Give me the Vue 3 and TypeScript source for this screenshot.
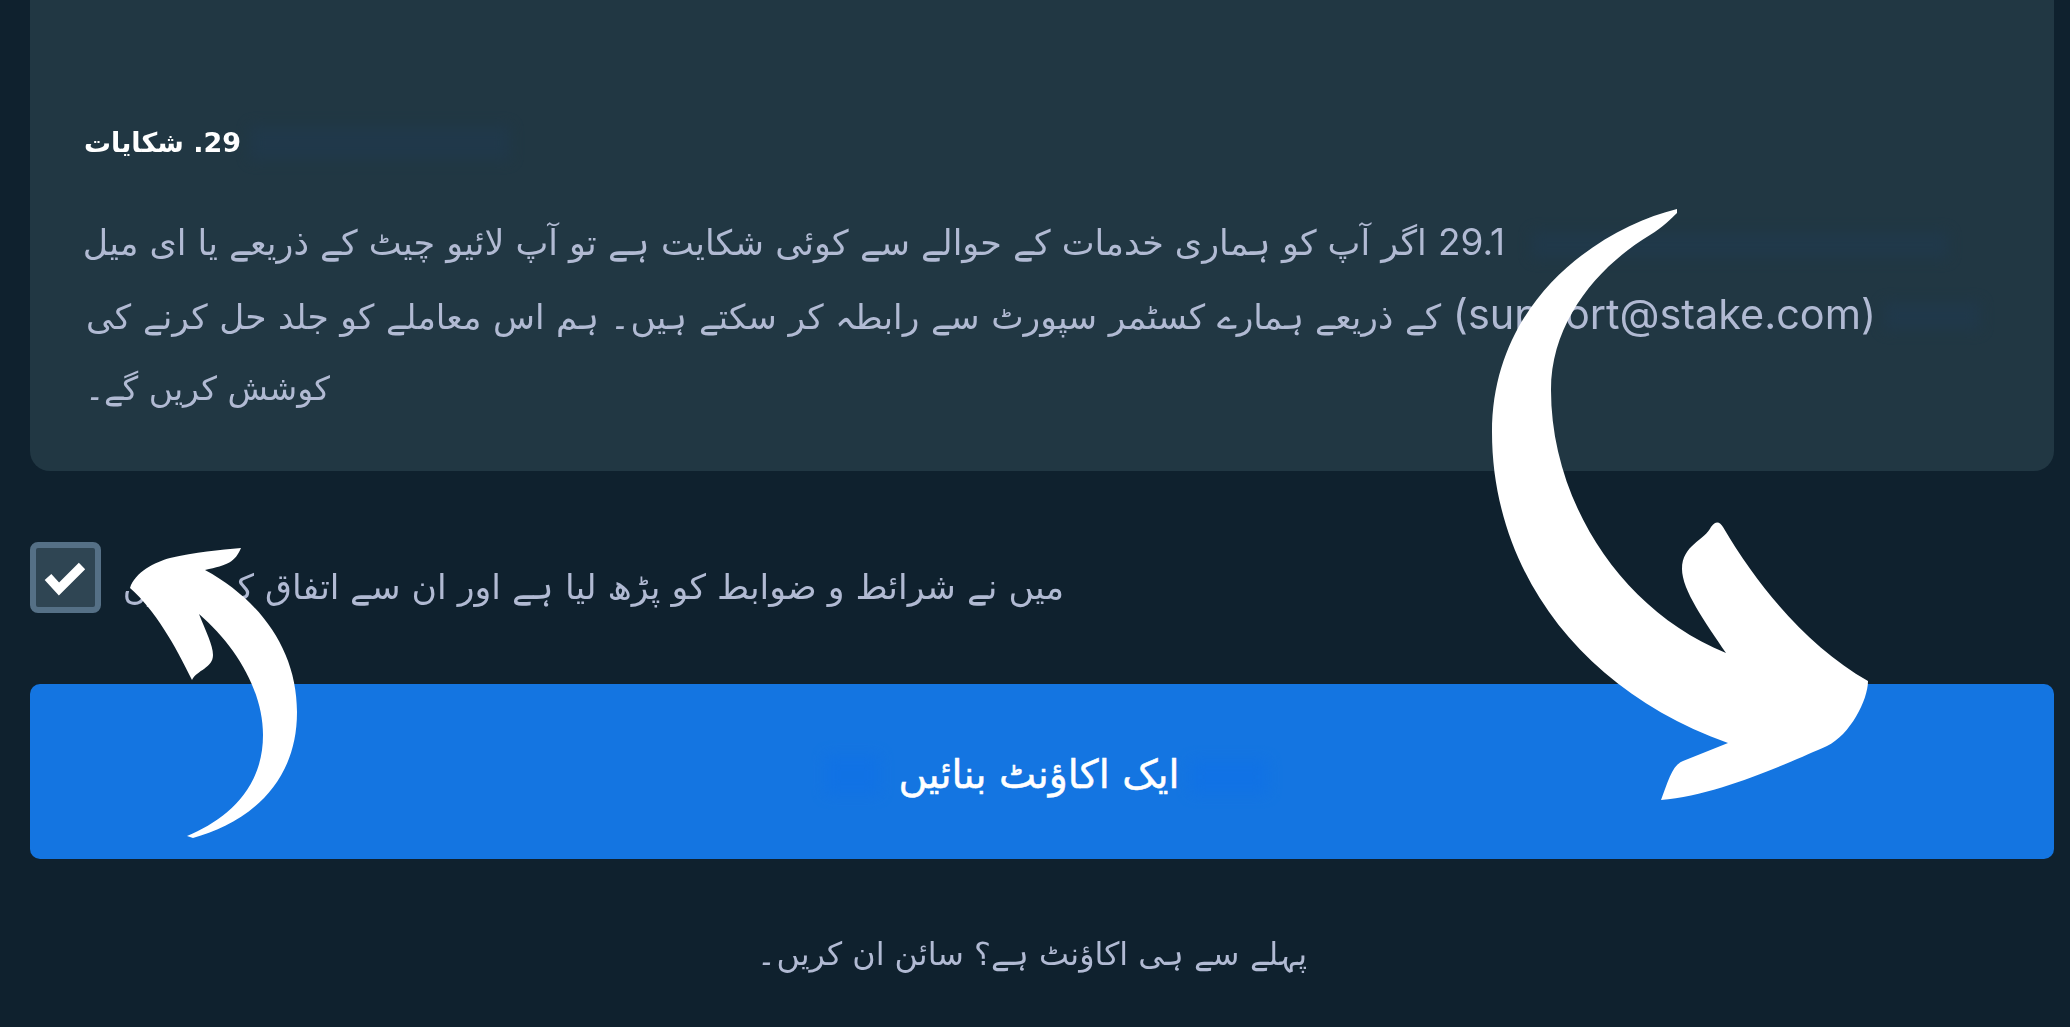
<script setup lang="ts">
const bigArrow =
  "M1677 209C1600 228 1492 300 1492 432C1492 570 1580 690 1728 743L1683 761C1672 765 1668 782 1661 800" +
  "C1720 795 1790 762 1827 746C1850 735 1868 700 1868 681C1810 648 1760 590 1723 527" +
  "C1720 522 1716 520 1711 527C1705 540 1682 545 1682 569C1682 590 1705 622 1726 653" +
  "C1620 610 1551 500 1551 390C1551 320 1600 265 1650 235C1662 228 1672 218 1677 213Z";

const smallArrow =
  "M241 548C235 562 228 565 205 570C260 600 297 650 297 712C297 790 240 825 193 838L187 836" +
  "C225 820 263 790 263 735C263 690 235 645 199 614C206 632 213 645 213 655C213 668 197 670 192 680" +
  "C175 645 155 610 130 588C135 572 155 562 170 558C195 552 220 550 241 548Z";
</script>

<template>
  <div class="page">
    <section class="card">
      <h3 class="heading" dir="rtl">29. شکایات</h3>
      <p class="line line-one" dir="rtl"><span class="latin">29.1</span> اگر آپ کو ہماری خدمات کے حوالے سے کوئی شکایت ہے تو آپ لائیو چیٹ کے ذریعے یا ای میل</p>
      <p class="line line-two" dir="rtl"><span class="latin latin-wide">(support@stake.com)</span> کے ذریعے ہمارے کسٹمر سپورٹ سے رابطہ کر سکتے ہیں۔ ہم اس معاملے کو جلد حل کرنے کی</p>
      <p class="line line-three" dir="rtl">کوشش کریں گے۔</p>
    </section>

    <label class="agree">
      <span class="box">
        <svg class="tick" viewBox="0 0 59 59" aria-hidden="true">
          <polyline points="12,29 23,41 46,18" fill="none" stroke="#fff" stroke-width="9" />
        </svg>
      </span>
      <span class="agree-text" dir="rtl">میں نے شرائط و ضوابط کو پڑھ لیا ہے اور ان سے اتفاق کرتا ہوں</span>
    </label>

    <button class="submit" type="button"><span dir="rtl">ایک اکاؤنٹ بنائیں</span></button>

    <p class="signin" dir="rtl">پہلے سے ہی اکاؤنٹ ہے؟ سائن ان کریں۔</p>

    <i class="smudge smudge-heading"></i>
    <i class="smudge smudge-one"></i>
    <i class="smudge smudge-two"></i>
    <i class="smudge smudge-btn-left"></i>
    <i class="smudge smudge-btn-right"></i>

    <svg class="arrows" viewBox="0 0 2070 1027" aria-hidden="true">
      <path :d="bigArrow" fill="#fff" />
      <path :d="smallArrow" fill="#fff" />
    </svg>
  </div>
</template>

<style scoped>
.page {
  position: relative;
  width: 2070px;
  height: 1027px;
  box-sizing: border-box;
  padding: 0 16px 0 30px;
  overflow: hidden;
  background: #0f212e;
  font-family: "DejaVu Sans", sans-serif;
  color: #b1bad3;
}
.card {
  height: 471px;
  box-sizing: border-box;
  padding-top: 122px;
  background: #213743;
  border-radius: 0 0 20px 20px;
}
.heading {
  width: 211px;
  margin: 0 0 42px;
  font-size: 27px;
  line-height: 42px;
  font-weight: 700;
  color: #fff;
  white-space: nowrap;
  filter: blur(0.4px);
}
.line {
  margin: 0;
  font-size: 34.9px;
  line-height: 71px;
  white-space: nowrap;
  filter: blur(0.4px);
}
.line-one { width: 1475px; }
.line-two { width: 1846px; font-size: 34.4px; word-spacing: 0.65px; }
.line-three { width: 300px; font-size: 33px; }
.latin {
  font-family: Inter, sans-serif;
  font-size: 37px;
}
.latin-wide { font-size: 41.4px; }
.agree {
  display: flex;
  align-items: center;
  height: 71px;
  margin-top: 71px;
}
.box {
  box-sizing: border-box;
  width: 71px;
  height: 71px;
  flex: none;
  border: 6px solid #557086;
  border-radius: 8px;
  background: #2f4553;
}
.tick {
  display: block;
  width: 59px;
  height: 59px;
}
.agree-text {
  width: 963px;
  padding-top: 19px;
  font-size: 34.7px;
  white-space: nowrap;
  filter: blur(0.4px);
}
.submit {
  display: flex;
  align-items: center;
  justify-content: center;
  width: 100%;
  height: 175px;
  margin-top: 71px;
  padding: 5px 6px 0 0;
  border: 0;
  border-radius: 10px;
  background: #1475e1;
  color: #fff;
  font-family: inherit;
  font-size: 39.5px;
  font-weight: 400;
  -webkit-text-stroke: 0.5px #fff;
}
.signin {
  margin: 67px 0 0;
  width: 1277px;
  font-size: 31.8px;
  line-height: 56px;
  white-space: nowrap;
  filter: blur(0.4px);
}
.smudge {
  position: absolute;
  opacity: 0.55;
  filter: blur(7px);
}
.smudge-heading { left: 250px; top: 126px; width: 260px; height: 34px; background: #1f3a50; }
.smudge-one { left: 1532px; top: 232px; width: 416px; height: 26px; background: #1f3a50; }
.smudge-two { left: 1884px; top: 302px; width: 96px; height: 28px; background: #1f3a50; }
.smudge-btn-left { left: 825px; top: 755px; width: 55px; height: 40px; background: #0e70e8; }
.smudge-btn-right { left: 1190px; top: 760px; width: 78px; height: 34px; background: #0e70e8; }
.arrows {
  position: absolute;
  inset: 0;
  width: 2070px;
  height: 1027px;
  pointer-events: none;
}
</style>
